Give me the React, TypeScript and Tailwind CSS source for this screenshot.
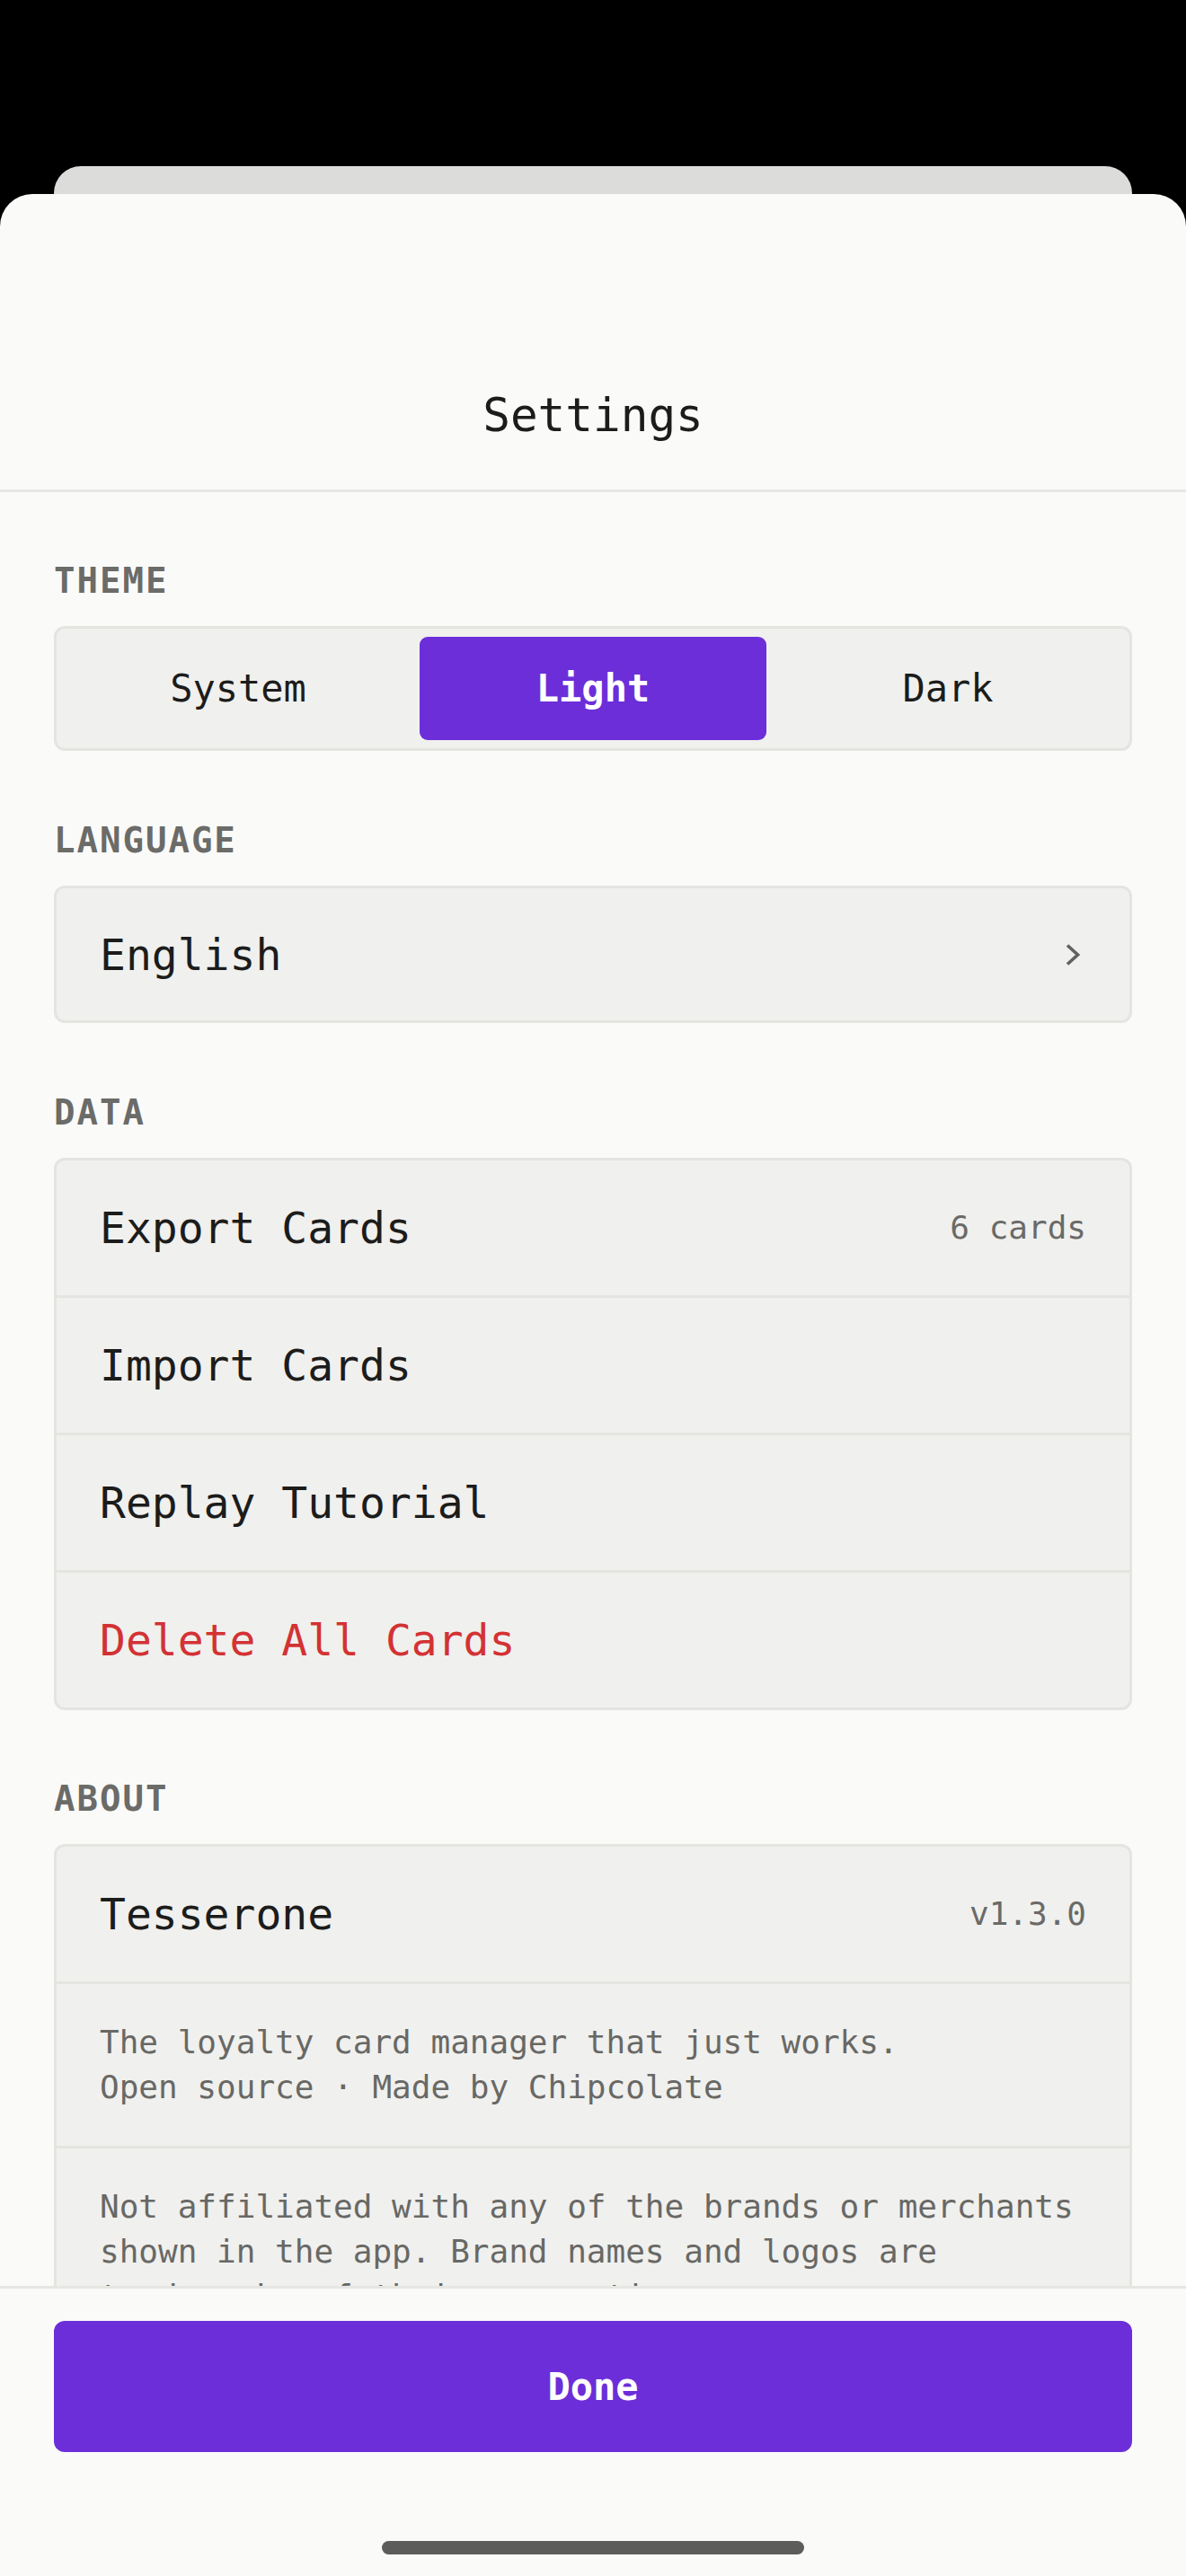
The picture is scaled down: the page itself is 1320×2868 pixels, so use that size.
import { useState } from "react";

type Theme = "system" | "light" | "dark";

const themes: { id: Theme; label: string }[] = [
  { id: "system", label: "System" },
  { id: "light", label: "Light" },
  { id: "dark", label: "Dark" },
];

const dataRows = [
  { label: "Export Cards", detail: "6 cards" },
  { label: "Import Cards" },
  { label: "Replay Tutorial" },
  { label: "Delete All Cards", danger: true },
];

const SectionLabel = ({ children }: { children: string }) => (
  <div className="mb-[26px] text-[39px] leading-[48px] font-bold tracking-[2px] text-[#6b6b68]">
    {children}
  </div>
);

const Chevron = () => (
  <svg width="16" height="24" viewBox="0 0 16 24" fill="none">
    <path
      d="M2 1.5 L13.5 12 L2 22.5"
      stroke="#626260"
      strokeWidth="3.6"
      strokeLinecap="butt"
      strokeLinejoin="miter"
    />
  </svg>
);

export default function App() {
  const [theme, setTheme] = useState<Theme>("light");

  return (
    <div className="w-[1320px] h-[2868px] bg-black flex flex-col overflow-hidden pt-[185px] font-['DejaVu_Sans_Mono',monospace] text-[#1c1c1b]">
      {/* stacked sheet behind */}
      <div className="shrink-0 mx-[60px] h-[31px] rounded-t-[30px] bg-[#dcdcdb]" />

      <div className="flex-1 min-h-0 flex flex-col rounded-t-[36px] bg-[#fafaf9]">
        <header className="shrink-0 h-[332px] flex items-end justify-center pb-[52px] border-b-[3px] border-[#e6e6e3]">
          <h1 className="text-[51px] leading-[60px]">Settings</h1>
        </header>

        <div className="flex-1 min-h-0 overflow-hidden px-[60px] pt-[75px]">
          <SectionLabel>THEME</SectionLabel>
          <div className="flex gap-[9px] p-[9px] rounded-[12px] border-[3px] border-[#e4e4e1] bg-[#f0f0ee]">
            {themes.map((t) => (
              <button
                key={t.id}
                onClick={() => setTheme(t.id)}
                className={
                  theme === t.id
                    ? "flex-1 h-[115px] rounded-[9px] bg-[#6c2ed9] text-white text-[42px] font-bold"
                    : "flex-1 h-[115px] rounded-[9px] text-[#1c1c1b] text-[42px]"
                }
              >
                {t.label}
              </button>
            ))}
          </div>

          <div className="mt-[76px]">
            <SectionLabel>LANGUAGE</SectionLabel>
            <div className="h-[153px] flex items-center justify-between pl-[48px] pr-[55px] rounded-[12px] border-[3px] border-[#e4e4e1] bg-[#f0f0ee]">
              <span className="text-[48px]">English</span>
              <Chevron />
            </div>
          </div>

          <div className="mt-[76px]">
            <SectionLabel>DATA</SectionLabel>
            <div className="rounded-[12px] border-[3px] border-[#e4e4e1] bg-[#f0f0ee] overflow-hidden">
              {dataRows.map((row, i) => (
                <div
                  key={row.label}
                  className={
                    i === 0
                      ? "h-[150px] flex items-center justify-between px-[48px]"
                      : "h-[153px] flex items-center justify-between px-[48px] border-t-[3px] border-[#e4e4e1]"
                  }
                >
                  <span
                    className={
                      row.danger
                        ? "text-[48px] text-[#d33234]"
                        : "text-[48px]"
                    }
                  >
                    {row.label}
                  </span>
                  {row.detail && (
                    <span className="text-[36px] text-[#6a6a67]">
                      {row.detail}
                    </span>
                  )}
                </div>
              ))}
            </div>
          </div>

          <div className="mt-[75px]">
            <SectionLabel>ABOUT</SectionLabel>
            <div className="rounded-[12px] border-[3px] border-[#e4e4e1] bg-[#f0f0ee] overflow-hidden">
              <div className="h-[150px] flex items-center justify-between px-[48px]">
                <span className="text-[48px]">Tesserone</span>
                <span className="text-[36px] text-[#6a6a67]">v1.3.0</span>
              </div>
              <div className="border-t-[3px] border-[#e4e4e1] px-[48px] py-[40px] text-[36px] leading-[50px] text-[#686865]">
                <p>The loyalty card manager that just works.</p>
                <p>Open source · Made by Chipcolate</p>
              </div>
              <div className="border-t-[3px] border-[#e4e4e1] px-[48px] py-[40px] text-[36px] leading-[50px] text-[#686865]">
                <p>
                  Not affiliated with any of the brands or merchants shown in
                  the app. Brand names and logos are trademarks of their
                  respective owners.
                </p>
              </div>
            </div>
          </div>
        </div>

        <footer className="shrink-0 border-t-[3px] border-[#e6e6e3] bg-[#fafaf9] pt-[36px] px-[60px] pb-[24px]">
          <button className="w-full h-[146px] rounded-[12px] bg-[#6c2ed9] text-white text-[42px] font-bold">
            Done
          </button>
          <div className="mt-[99px] mx-auto w-[470px] h-[15px] rounded-full bg-[#5c5c5b]" />
        </footer>
      </div>
    </div>
  );
}
